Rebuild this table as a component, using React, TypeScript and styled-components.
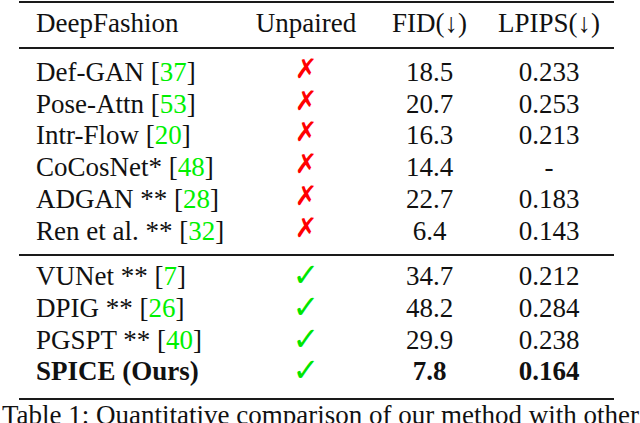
import * as React from "react";
import styled, { createGlobalStyle } from "styled-components";

const GlobalStyle = createGlobalStyle`
  html, body {
    margin: 0;
    padding: 0;
    background: #ffffff;
  }
  body {
    width: 640px;
    height: 423px;
    overflow: hidden;
    font-family: "Liberation Serif", "Times New Roman", serif;
    color: #111111;
  }
`;

interface Result {
  name: string;
  cite?: string;
  unpaired: boolean;
  fid: string;
  lpips: string;
  bold?: boolean;
}

const supervised: Result[] = [
  { name: "Def-GAN", cite: "37", unpaired: false, fid: "18.5", lpips: "0.233" },
  { name: "Pose-Attn", cite: "53", unpaired: false, fid: "20.7", lpips: "0.253" },
  { name: "Intr-Flow", cite: "20", unpaired: false, fid: "16.3", lpips: "0.213" },
  { name: "CoCosNet*", cite: "48", unpaired: false, fid: "14.4", lpips: "-" },
  { name: "ADGAN **", cite: "28", unpaired: false, fid: "22.7", lpips: "0.183" },
  { name: "Ren et al. **", cite: "32", unpaired: false, fid: "6.4", lpips: "0.143" },
];

const unsupervised: Result[] = [
  { name: "VUNet **", cite: "7", unpaired: true, fid: "34.7", lpips: "0.212" },
  { name: "DPIG **", cite: "26", unpaired: true, fid: "48.2", lpips: "0.284" },
  { name: "PGSPT **", cite: "40", unpaired: true, fid: "29.9", lpips: "0.238" },
  { name: "SPICE (Ours)", unpaired: true, fid: "7.8", lpips: "0.164", bold: true },
];

const Page = styled.div`
  display: flex;
  flex-direction: column;
  width: 640px;
`;

const Table = styled.div`
  display: flex;
  flex-direction: column;
  width: 595px;
  margin: 1px 0 0 19px;
`;

const Rule = styled.div<{ $gapTop: number }>`
  height: 2px;
  background: #1a1a1a;
  margin-top: ${(p) => p.$gapTop}px;
`;

const Block = styled.div<{ $gapTop: number }>`
  display: flex;
  flex-direction: column;
  margin-top: ${(p) => p.$gapTop}px;
`;

const Row = styled.div<{ $bold?: boolean }>`
  display: grid;
  grid-template-columns: 218px 138px 109px 130px;
  align-items: baseline;
  height: 31.8px;
  font-size: 27px;
  line-height: 31.8px;
  font-weight: ${(p) => (p.$bold ? 700 : 400)};
  white-space: nowrap;
`;

const NameCell = styled.div`
  padding-left: 17px;
`;

const CenterCell = styled.div`
  text-align: center;
`;

const Cite = styled.span`
  color: #00f000;
`;

const Mark = styled.span<{ $ok: boolean }>`
  display: inline-block;
  font-family: "DejaVu Sans", sans-serif;
  font-weight: 700;
  line-height: 20px;
  font-size: ${(p) => (p.$ok ? "32px" : "27px")};
  color: ${(p) => (p.$ok ? "#00e600" : "#ff0000")};
  transform: ${(p) => (p.$ok ? "translateY(1px)" : "translateY(-3px)")};
`;

const Caption = styled.div`
  margin-top: 2px;
  padding-left: 2px;
  font-size: 27px;
  line-height: 27px;
  white-space: nowrap;
  overflow: hidden;
`;

const ResultRow = ({ r }: { r: Result }) => (
  <Row $bold={r.bold}>
    <NameCell>
      {r.name}
      {r.cite && (
        <>
          {" "}[<Cite>{r.cite}</Cite>]
        </>
      )}
    </NameCell>
    <CenterCell>
      <Mark $ok={r.unpaired}>{r.unpaired ? "\u2713" : "\u2717"}</Mark>
    </CenterCell>
    <CenterCell>{r.fid}</CenterCell>
    <CenterCell>{r.lpips}</CenterCell>
  </Row>
);

export default function App() {
  return (
    <Page>
      <GlobalStyle />
      <Table>
        <Rule $gapTop={0} />
        <Block $gapTop={5}>
          <Row>
            <NameCell>DeepFashion</NameCell>
            <CenterCell>Unpaired</CenterCell>
            <CenterCell>FID(↓)</CenterCell>
            <CenterCell>LPIPS(↓)</CenterCell>
          </Row>
        </Block>
        <Rule $gapTop={7} />
        <Block $gapTop={8}>
          {supervised.map((r) => (
            <ResultRow key={r.name} r={r} />
          ))}
        </Block>
        <Rule $gapTop={6} />
        <Block $gapTop={5.4}>
          {unsupervised.map((r) => (
            <ResultRow key={r.name} r={r} />
          ))}
        </Block>
        <Rule $gapTop={10} />
      </Table>
      <Caption>Table 1: Quantitative comparison of our method with other</Caption>
    </Page>
  );
}
